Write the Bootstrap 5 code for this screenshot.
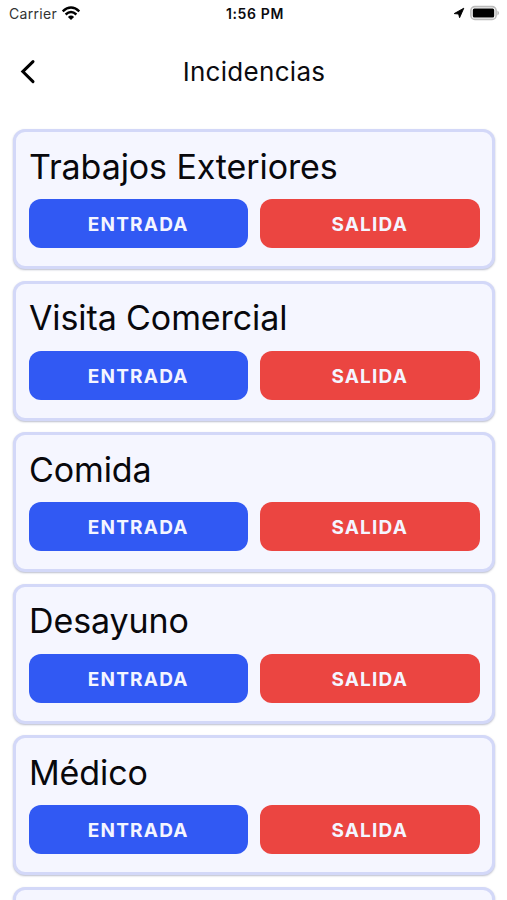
<!DOCTYPE html>
<html lang="es">
<head>
<meta charset="utf-8">
<meta name="viewport" content="width=device-width, initial-scale=1">
<title>Incidencias</title>
<link href="https://cdn.jsdelivr.net/npm/bootstrap@5.3.0/dist/css/bootstrap.min.css" rel="stylesheet">
<style>
  body { font-family: Inter, "Liberation Sans", sans-serif; color: #0b0b0f; }
  .screen { height: 900px; }
  .status-bar { height: 26px; margin-bottom: 2px; padding: 0 6px 0 9px; font-size: 14px; line-height: 24px; }
  .status-bar > div { flex: 1 1 0; }
  .carrier { color: #333; letter-spacing: .3px; }
  .clock { font-weight: 600; font-size: 14px; letter-spacing: .65px; }
  .clock, .carrier span { padding-top: 2px; }
  .app-bar { height: 88px; padding: 0 20px; }
  .app-bar > div { flex: 1 1 0; }
  .app-title { font-size: 26px; line-height: 36px; letter-spacing: .3px; padding-left: 1px; }
  .incident-list { padding: 13px 12px 0 13px; gap: 11.6px; }
  .incident { height: 140px; border: 3px solid #d3d8f8; border-radius: 12px; background: #f5f6ff; padding: 12.5px 12.5px 0; box-shadow: 0 1px 2px rgba(60,70,110,.35); }
  .incident h2 { font-size: 34px; line-height: 44px; font-weight: 400; margin: 0 0 10.5px .5px; letter-spacing: -.1px; color: #08080c; }
  .actions { gap: 12px; }
  .action { height: 49px; border: 0; border-radius: 12px; font-size: 19px; font-weight: 650; letter-spacing: 1.2px; padding: 3.4px 0 0; }
  .action, .action:hover { color: #f4f5ff; }
  .action-in, .action-in:hover { background: #3159f3; }
  .action-out, .action-out:hover { background: #eb4541; }
</style>
</head>
<body class="bg-white">
<main class="screen d-flex flex-column overflow-hidden">
  <div class="status-bar d-flex align-items-center flex-shrink-0">
    <div class="d-flex align-items-center carrier"><span>Carrier</span>
      <svg class="ms-1" width="20" height="15" viewBox="0 0 20 15" fill="none" stroke="#000" stroke-width="2.4"><path d="M1.7 5.3Q10-2.2 18.3 5.3M4.6 8.5Q10 3.7 15.4 8.5"/><path d="M6.9 10.9Q10 8 13.1 10.9L10 14Z" fill="#000" stroke="none"/></svg>
    </div>
    <span class="clock">1:56 PM</span>
    <div class="d-flex align-items-center justify-content-end">
      <svg width="12" height="12" viewBox="0 0 12 12"><path d="M10.8 1.2 6.6 10.7 5.6 7 1.2 6.6Z" fill="#000" stroke="#000" stroke-width=".9" stroke-linejoin="round"/></svg>
      <svg class="ms-1" width="32" height="16" viewBox="0 0 32 16"><rect x="1.9" y="1.6" width="25.2" height="12.8" rx="4" fill="#fff" stroke="#bbb" stroke-width="1.6"/><rect x="3.8" y="3.5" width="21.4" height="9" rx="1.5" fill="#000"/><path d="M28.4 5.5Q31.9 8 28.4 10.5Z" fill="#bbb"/></svg>
    </div>
  </div>
  <header class="app-bar d-flex align-items-center flex-shrink-0">
    <div class="d-flex"><svg width="16" height="26" viewBox="0 0 16 26" fill="none" stroke="#000" stroke-width="3" stroke-linecap="round" stroke-linejoin="miter"><path d="M13 2.6 2.8 12.6 13 22.6"/></svg></div>
    <h1 class="app-title fw-normal mb-0">Incidencias</h1>
    <div></div>
  </header>
  <section class="incident-list d-flex flex-column">
    <article class="incident flex-shrink-0"><h2>Trabajos Exteriores</h2><div class="actions d-flex"><button class="btn action action-in w-50">ENTRADA</button><button class="btn action action-out w-50">SALIDA</button></div></article>
    <article class="incident flex-shrink-0"><h2>Visita Comercial</h2><div class="actions d-flex"><button class="btn action action-in w-50">ENTRADA</button><button class="btn action action-out w-50">SALIDA</button></div></article>
    <article class="incident flex-shrink-0"><h2>Comida</h2><div class="actions d-flex"><button class="btn action action-in w-50">ENTRADA</button><button class="btn action action-out w-50">SALIDA</button></div></article>
    <article class="incident flex-shrink-0"><h2>Desayuno</h2><div class="actions d-flex"><button class="btn action action-in w-50">ENTRADA</button><button class="btn action action-out w-50">SALIDA</button></div></article>
    <article class="incident flex-shrink-0"><h2>Médico</h2><div class="actions d-flex"><button class="btn action action-in w-50">ENTRADA</button><button class="btn action action-out w-50">SALIDA</button></div></article>
    <article class="incident flex-shrink-0"></article>
  </section>
</main>
<script src="https://cdn.jsdelivr.net/npm/bootstrap@5.3.0/dist/js/bootstrap.bundle.min.js"></script>
</body>
</html>
